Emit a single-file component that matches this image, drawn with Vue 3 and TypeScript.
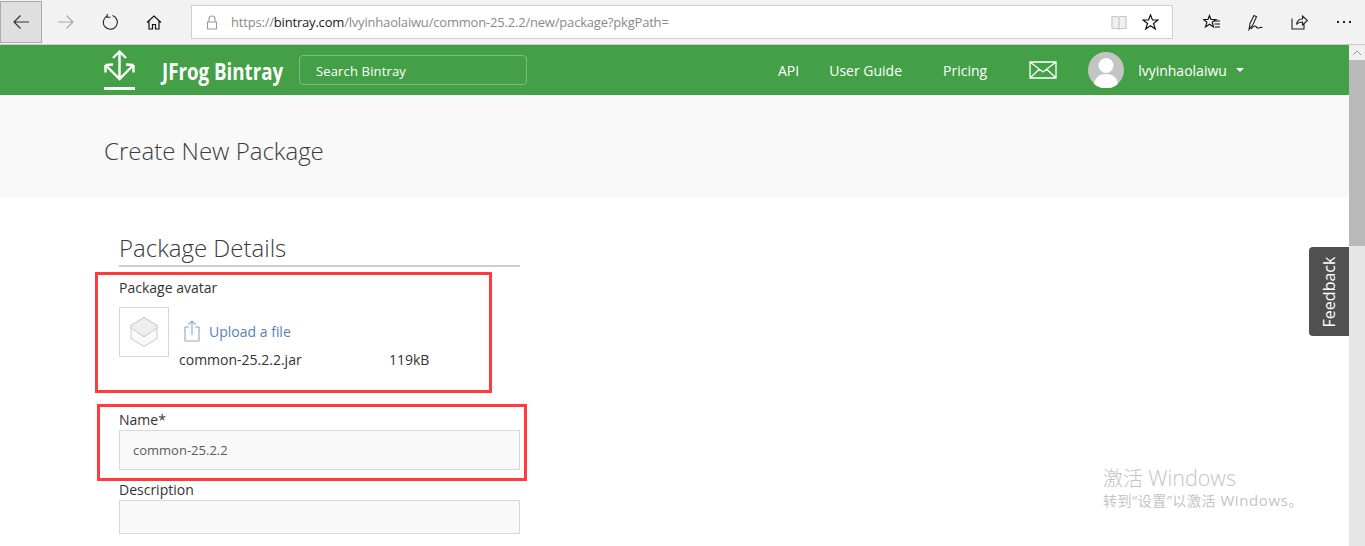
<template>
  <div class="page">
    <div class="browser">
      <button class="nav-btn back">
        <svg width="18" height="16" viewBox="0 0 18 16"><path d="M17 8H2M8.500 1.500 2 8l6.500 6.500" fill="none" stroke="#333" stroke-width="1.200" /></svg>
      </button>
      <div class="nav-btn">
        <svg width="18" height="16" viewBox="0 0 18 16"><path d="M1 8h15M9.500 1.500 16 8l-6.500 6.500" fill="none" stroke="#aaa" stroke-width="1.200" /></svg>
      </div>
      <div class="nav-btn">
        <svg width="16" height="16" viewBox="0 0 16 16"><path d="M5.600 1.800A7 7 0 1 0 10.500 1.600M5.200 0v3.200h3.200" fill="none" stroke="#222" stroke-width="1.100" /></svg>
      </div>
      <div class="nav-btn">
        <svg width="16" height="15" viewBox="0 0 16 15"><path d="M1 7.500 8 1l7 6.500M3 6v8h3.500V9.500h3V14H13V6" fill="none" stroke="#111" stroke-width="1.200" /></svg>
      </div>
      <div class="address">
        <svg class="lock" width="12" height="15" viewBox="0 0 12 15"><path d="M3 7V4a3 3 0 0 1 6 0v3M1.500 7h9v7h-9z" fill="none" stroke="#999" stroke-width="1.100" /></svg>
        <span class="url">https://<b>bintray.com</b>/lvyinhaolaiwu/common-25.2.2/new/package?pkgPath=</span>
        <svg class="book" width="16" height="15" viewBox="0 0 16 15"><path d="M1 1.500h5.500L8 2.500l1.500-1H15v12H9.500L8 14l-1.500-.5H1zM8 2.500V14" fill="#f0f0f0" stroke="#c9c9c9" stroke-width="1.200" /></svg>
        <svg class="star" width="17" height="16" viewBox="0 0 17 16"><path d="m8.500 1 2 5h5.500l-4.500 3.500 1.800 5.500-4.800-3.300L3.700 15l1.800-5.500L1 6h5.500z" fill="none" stroke="#111" stroke-width="1.200" /></svg>
      </div>
      <div class="tools">
        <svg width="18" height="16" viewBox="0 0 18 16"><path d="m6.500 1.500 1.500 4h5l-3.800 2.800 1.400 4.700-4.100-2.800L2.400 13l1.500-4.700L.5 5.500H5z" fill="none" stroke="#111" stroke-width="1.100" /><path d="M11 7h6M11.500 10h5.500M12 13h5" stroke="#111" stroke-width="1.100" /></svg>
        <svg width="16" height="17" viewBox="0 0 16 17"><path d="M1 15.500 2 9.500 6 1.500l2.500 1.200L5 10.500zM3 15c2-3 4-3.500 5-2.500s1 2 2.500 1.500 2-1 4-.5" fill="none" stroke="#222" stroke-width="1.100" /></svg>
        <svg width="17" height="16" viewBox="0 0 17 16"><path d="M1 4.500V15h12V10M5.500 10.500C6 7 8.500 5 11.500 5V2l5 4.500-5 4.500V8C9 8 7 8.500 5.500 10.500z" fill="none" stroke="#222" stroke-width="1.100" /></svg>
        <span class="dots"><i></i><i></i><i></i></span>
      </div>
    </div>

    <div class="viewport">
      <div class="content">
        <header class="topbar">
          <div class="logo-mark">
            <svg width="32" height="40" viewBox="0 0 32 40">
              <path d="M15.500 1.500V29M9 8l6.500-6.500L22 8M1.500 15l14 14 14-14M1.500 15l7.500-.5M1.500 15v7.500M29.500 15l-7.500-.5M29.500 15v7.500" fill="none" stroke="#fff" stroke-width="2.400" />
              <rect y="37" width="31" height="3" fill="#fff" />
            </svg>
          </div>
          <span class="logo-slot"><span class="logo-text">JFrog Bintray</span></span>
          <div class="search">Search Bintray</div>
          <nav class="links">
            <a class="api">API</a>
            <a class="guide">User Guide</a>
            <a class="pricing">Pricing</a>
          </nav>
          <svg class="mail" width="28" height="18" viewBox="0 0 28 18"><path d="M1 1h26v16H1zM1 1l13 10L27 1M1 17l9.500-9M27 17l-9.500-9" fill="none" stroke="#fff" stroke-width="1.300" /></svg>
          <div class="avatar">
            <svg width="36" height="36" viewBox="0 0 36 36"><circle cx="18" cy="18" r="18" fill="#c4c4c4" /><circle cx="18" cy="13.500" r="7.500" fill="#fff" /><path d="M6 32c1-7 6-10 12-10s11 3 12 10a18 18 0 0 1-24 0z" fill="#fff" /></svg>
          </div>
          <span class="user">lvyinhaolaiwu</span>
          <span class="caret"></span>
        </header>

        <section class="hero">
          <h1>Create New Package</h1>
        </section>

        <main class="form">
          <h2>Package Details</h2>
          <div class="field-label avatar-label">Package avatar</div>
          <div class="upload">
            <div class="pkg-thumb">
              <svg width="30" height="32" viewBox="0 0 30 32">
                <path d="M15 1.500 28 9.500V22.500L15 30.500 2 22.500V9.500z" fill="#fafafa" stroke="#c9c9c9" stroke-linejoin="round" />
                <path d="M15 1.500 28 9.500V12L15 21 2 12V9.500z" fill="#eeeeee" stroke="#c9c9c9" stroke-linejoin="round" />
              </svg>
            </div>
            <div class="upload-info">
              <div class="upload-link">
                <svg width="16" height="22" viewBox="0 0 16 22"><path d="M5 7H1v14h14V7h-4M8 15V1M4.500 4.500 8 1l3.500 3.500" fill="none" stroke="#8fa8cf" stroke-width="1.100" /></svg>
                <span>Upload a file</span>
              </div>
              <div class="file-row">
                <span class="file-name">common-25.2.2.jar</span>
                <span>119kB</span>
              </div>
            </div>
          </div>
          <label class="field-label name-label">Name*</label>
          <div class="input name-input">common-25.2.2</div>
          <label class="field-label desc-label">Description</label>
          <div class="input desc-input"></div>
        </main>

        <div class="mark mark-one"></div>
        <div class="mark mark-two"></div>
        <div class="feedback"><span>Feedback</span></div>
        <div class="activate">
          <div class="activate-title">激活 <span class="win-big">Windows</span></div>
          <div class="activate-sub">转到“设置”以激活 <span class="win-small">Windows</span>。</div>
        </div>
      </div>

      <div class="scrollbar">
        <div class="arrow">
          <svg width="10" height="6" viewBox="0 0 10 6"><path d="M1 5 5 1l4 4" fill="none" stroke="#999" /></svg>
        </div>
        <div class="thumb"></div>
      </div>
    </div>
  </div>
</template>

<script setup lang="ts">
</script>

<style>
html,
body {
  margin: 0;
  overflow: hidden;
}
</style>

<style scoped>
.page {
  width: 1365px;
  height: 546px;
  overflow: hidden;
  font-family: "Open Sans", "Noto Sans CJK SC", sans-serif;
  background: #fff;
}

.browser {
  height: 44px;
  display: flex;
  align-items: center;
  background: #f2f2f2;
  border-bottom: 1px solid #cbcbcb;
}

.nav-btn {
  width: 44px;
  height: 42px;
  display: flex;
  align-items: center;
  justify-content: center;
  flex: none;
}

.back {
  width: 42px;
  margin-right: 2px;
  padding: 0;
  background: #dfdfdf;
  border: 1px solid #ababab;
  box-sizing: border-box;
}

.address {
  width: 982px;
  height: 34px;
  box-sizing: border-box;
  display: flex;
  align-items: center;
  background: #fff;
  border: 1px solid #cfcfcf;
  margin-left: 15px;
  padding: 0 13px 0 14px;
}

.url {
  flex: 1;
  margin-left: 13px;
  font-size: 13px;
  letter-spacing: -0.19px;
  color: #8a8a8a;
}

.url b {
  font-weight: 400;
  color: #1a1a1a;
}

.book {
  margin-right: 15px;
}

.tools {
  flex: 1;
  display: flex;
  align-items: center;
  padding-left: 30px;
  gap: 27px;
}

.dots {
  display: flex;
  gap: 4px;
  margin-left: 2px;
}

.dots i {
  width: 2px;
  height: 2px;
  background: #222;
}

.viewport {
  position: relative;
  height: 501px;
  display: flex;
}

.content {
  position: relative;
  flex: 1;
  min-width: 0;
}

.topbar {
  height: 50px;
  display: flex;
  align-items: center;
  background: #43a047;
  color: #fff;
  padding-left: 104px;
}

.logo-mark {
  height: 40px;
  width: 32px;
}

.logo-slot {
  margin-left: 26px;
  width: 137px;
  white-space: nowrap;
}

.logo-text {
  display: inline-block;
  font-weight: 700;
  font-size: 24px;
  transform: scaleX(0.78);
  transform-origin: left center;
}

.search {
  width: 228px;
  height: 30px;
  box-sizing: border-box;
  border: 1px solid #7cbc7f;
  border-radius: 4px;
  padding-left: 16px;
  font-size: 13px;
  letter-spacing: 0.15px;
  line-height: 30px;
}

.links {
  margin-left: 251px;
  display: flex;
  font-size: 14px;
}

.guide {
  margin-left: 30px;
}

.pricing {
  margin-left: 41px;
}

.mail {
  margin-left: 42px;
}

.avatar {
  margin-left: 31px;
  height: 36px;
}

.user {
  margin-left: 14px;
  font-size: 14px;
}

.caret {
  margin-left: 9px;
  border-left: 4px solid transparent;
  border-right: 4px solid transparent;
  border-top: 4px solid #fff;
}

.hero {
  height: 102px;
  box-sizing: border-box;
  padding: 8px 0 0 104px;
  display: flex;
  align-items: center;
  background: #f9f9f9;
}

h1 {
  margin: 0;
  font-size: 24px;
  font-weight: 300;
  color: #3c3c3c;
}

.form {
  width: 401px;
  margin-left: 119px;
  padding-top: 36px;
}

h2 {
  margin: 0;
  height: 32px;
  line-height: 30px;
  font-size: 24px;
  font-weight: 300;
  color: #3a3a3a;
  border-bottom: 2px solid #cecece;
}

.field-label {
  display: block;
  font-size: 14px;
  line-height: 20px;
  color: #333;
}

.avatar-label {
  margin-top: 11px;
}

.upload {
  display: flex;
  margin-top: 9px;
}

.pkg-thumb {
  width: 50px;
  height: 50px;
  box-sizing: border-box;
  border: 1px solid #d8d8d8;
  display: flex;
  align-items: center;
  justify-content: center;
}

.upload-info {
  margin-left: 10px;
  flex: 1;
}

.upload-link {
  display: flex;
  align-items: center;
  margin-left: 5px;
  height: 32px;
  margin-top: 8px;
  gap: 9px;
  font-size: 14px;
  color: #5b7fb5;
}

.file-row {
  display: flex;
  margin-top: 3px;
  font-size: 14px;
  line-height: 20px;
  color: #333;
}

.file-name {
  width: 210px;
}

.name-label {
  margin-top: 40px;
}

.input {
  box-sizing: border-box;
  border: 1px solid #d8d8d8;
  background: #f9f9f9;
  font-size: 13px;
  color: #5a5a5a;
  padding-left: 13px;
}

.name-input {
  height: 40px;
  line-height: 38px;
}

.desc-label {
  margin-top: 10px;
}

.desc-input {
  height: 34px;
}

.mark {
  position: absolute;
  box-sizing: border-box;
  border: 3px solid #ff3b3b;
}

.mark-one {
  left: 95px;
  top: 227px;
  width: 397px;
  height: 121px;
}

.mark-two {
  left: 97px;
  top: 359px;
  width: 430px;
  height: 77px;
}

.feedback {
  position: absolute;
  right: 0;
  top: 202px;
  width: 40px;
  height: 89px;
  background: #505050;
  border-radius: 4px 0 0 4px;
  display: flex;
  align-items: center;
  justify-content: center;
}

.feedback span {
  transform: rotate(-90deg);
  color: #fff;
  font-size: 16px;
}

.activate {
  position: absolute;
  left: 1103px;
  top: 420px;
  color: #c4c4c4;
  white-space: nowrap;
}

.activate-title {
  font-size: 20px;
  line-height: 26px;
  font-weight: 300;
}

.win-big {
  font-size: 21.500px;
}

.activate-sub {
  font-size: 14px;
  line-height: 20px;
  letter-spacing: 0.6px;
  margin-top: -2px;
}

.win-small {
  font-size: 15px;
}

.scrollbar {
  width: 16px;
  flex: none;
  background: #e6e6e6;
}

.arrow {
  height: 15px;
  background: #f0f0f0;
  display: flex;
  align-items: center;
  justify-content: center;
}

.thumb {
  height: 186px;
  background: #b9b9b9;
}
</style>
